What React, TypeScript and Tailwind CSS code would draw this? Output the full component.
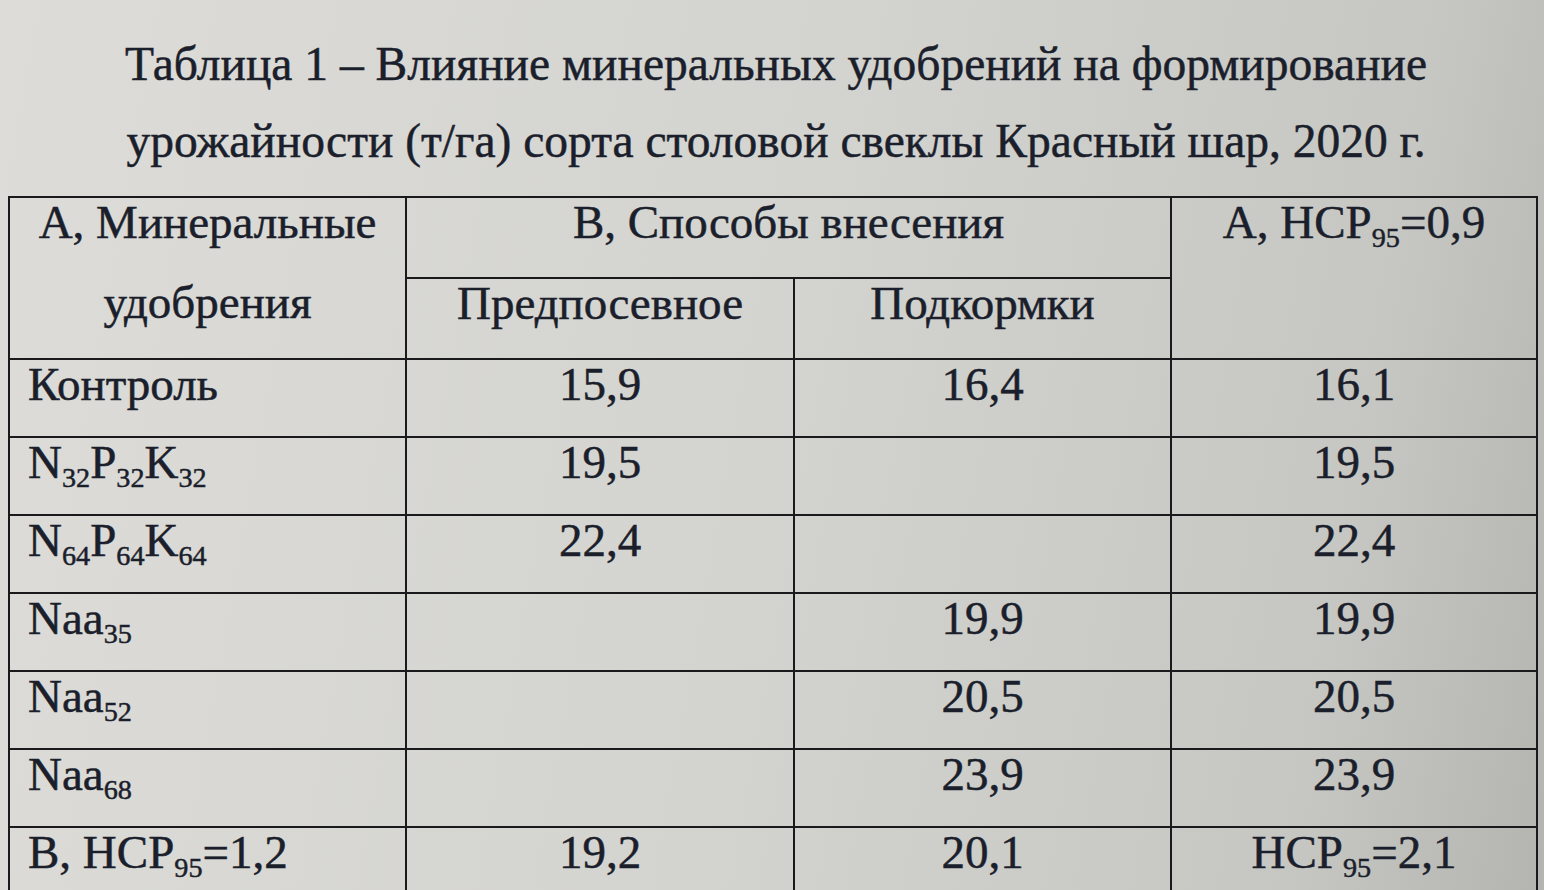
import React from "react";

type Row = { label: React.ReactNode; a: string; b: string; c: React.ReactNode };

const S = ({ children }: { children: React.ReactNode }) => (
  <sub className="text-[0.6em] relative -bottom-[0.32em]">{children}</sub>
);

const rows: Row[] = [
  { label: "Контроль", a: "15,9", b: "16,4", c: "16,1" },
  { label: <>N<S>32</S>P<S>32</S>K<S>32</S></>, a: "19,5", b: "", c: "19,5" },
  { label: <>N<S>64</S>P<S>64</S>K<S>64</S></>, a: "22,4", b: "", c: "22,4" },
  { label: <>Naa<S>35</S></>, a: "", b: "19,9", c: "19,9" },
  { label: <>Naa<S>52</S></>, a: "", b: "20,5", c: "20,5" },
  { label: <>Naa<S>68</S></>, a: "", b: "23,9", c: "23,9" },
  { label: <>В, НСР<S>95</S>=1,2</>, a: "19,2", b: "20,1", c: <>НСР<S>95</S>=2,1</> },
];

const cell = "border-[2.5px] border-[#1a1a1c] align-top pt-[4px] leading-[40px]";

export default function App() {
  return (
    <div
      className="w-[1544px] h-[890px] overflow-hidden text-[#1b1f2c] [-webkit-text-stroke:0.5px] bg-[linear-gradient(100deg,#dddcd8_0%,#d3d3cf_50%,#c6c6c2_85%,#b4b4b0_100%)]"
      style={{ fontFamily: '"Liberation Serif", "Times New Roman", serif' }}
    >
      <div className="pt-[26px] text-center text-[47.5px] leading-[77px] pl-[8px]">
        <p>Таблица 1 – Влияние минеральных удобрений на формирование</p>
        <p>урожайности (т/га) сорта столовой свеклы Красный шар, 2020 г.</p>
      </div>
      <div className="mt-[16px] pl-[8px] pr-[6px]">
        <table className="w-full border-collapse table-fixed text-[47px]">
          <colgroup>
            <col className="w-[397px]" />
            <col className="w-[388px]" />
            <col className="w-[377px]" />
            <col />
          </colgroup>
          <tbody>
            <tr className="h-[81px]">
              <td rowSpan={2} className={`${cell} text-center`}>
                <div className="h-[80px]">А, Минеральные</div>
                <div>удобрения</div>
              </td>
              <td colSpan={2} className={`${cell} text-center`}>
                В, Способы внесения
              </td>
              <td rowSpan={2} className={`${cell} text-center`}>
                А, НСР<S>95</S>=0,9
              </td>
            </tr>
            <tr className="h-[81px]">
              <td className={`${cell} text-center`}>Предпосевное</td>
              <td className={`${cell} text-center`}>Подкормки</td>
            </tr>
            {rows.map((r, i) => (
              <tr key={i} className="h-[78px]">
                <td className={`${cell} pl-[18px] text-left`}>{r.label}</td>
                <td className={`${cell} text-center`}>{r.a}</td>
                <td className={`${cell} text-center`}>{r.b}</td>
                <td className={`${cell} text-center`}>{r.c}</td>
              </tr>
            ))}
          </tbody>
        </table>
      </div>
    </div>
  );
}
